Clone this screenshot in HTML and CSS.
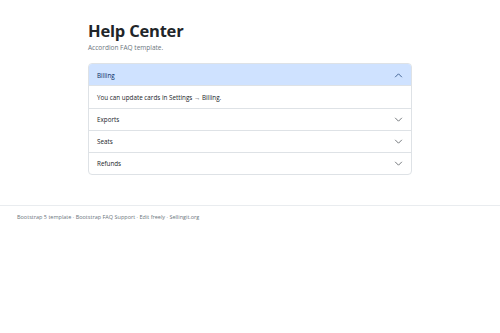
FILE: index.html
```html
<!DOCTYPE html>
<html lang="en">
<head>
<meta charset="utf-8">
<title>Help Center</title>
<link rel="stylesheet" href="styles.css">
</head>
<body>
<main class="container">
  <h1 class="title">Help Center</h1>
  <p class="lead">Accordion FAQ template.</p>
  <div class="accordion">
    <div class="item">
      <div class="header active">
        <span>Billing</span>
        <svg class="chev" viewBox="0 0 16 16" width="9" height="9"><path d="M2 11 L8 5 L14 11" fill="none" stroke="#052c65" stroke-width="1.2"/></svg>
      </div>
      <div class="body">You can update cards in Settings → Billing.</div>
    </div>
    <div class="item">
      <div class="header">
        <span>Exports</span>
        <svg class="chev" viewBox="0 0 16 16" width="9" height="9"><path d="M2 5 L8 11 L14 5" fill="none" stroke="#343a40" stroke-width="1.2"/></svg>
      </div>
    </div>
    <div class="item">
      <div class="header">
        <span>Seats</span>
        <svg class="chev" viewBox="0 0 16 16" width="9" height="9"><path d="M2 5 L8 11 L14 5" fill="none" stroke="#343a40" stroke-width="1.2"/></svg>
      </div>
    </div>
    <div class="item">
      <div class="header">
        <span>Refunds</span>
        <svg class="chev" viewBox="0 0 16 16" width="9" height="9"><path d="M2 5 L8 11 L14 5" fill="none" stroke="#343a40" stroke-width="1.2"/></svg>
      </div>
    </div>
  </div>
</main>
<footer class="footer">Bootstrap 5 template · Bootstrap FAQ Support · Edit freely · Sellingit.org</footer>
</body>
</html>
```
FILE: styles.css
```css
html, body {
  margin: 0;
  padding: 0;
  background: #fff;
}
body {
  font-family: "Open Sans", "Noto Sans", sans-serif;
  color: #212529;
}
.container {
  width: 324px;
  margin: 0 auto;
  padding-top: 20px;
  padding-bottom: 30px;
}
.title {
  margin: 0;
  font-size: 16.5px;
  font-weight: 700;
  line-height: 22px;
  letter-spacing: -0.2px;
}
.lead {
  margin: 1px 0 10px;
  font-size: 6.5px;
  line-height: 10px;
  color: #6c757d;
}
.accordion {
  border: 1px solid #dee2e6;
  border-radius: 4px;
  overflow: hidden;
}
.item + .item {
  border-top: 1px solid #dee2e6;
}
.header {
  height: 21px;
  display: flex;
  align-items: center;
  justify-content: space-between;
  padding: 0 8px;
  font-size: 6.3px;
  color: #212529;
}
.header.active {
  background: #cfe2ff;
  color: #052c65;
  box-shadow: inset 0 -1px 0 #dee2e6;
  height: 22px;
}
.chev {
  display: block;
}
.body {
  height: 22px;
  display: flex;
  align-items: center;
  padding: 0 8px;
  font-size: 6.3px;
  color: #212529;
}
.footer {
  border-top: 1px solid #e9ecef;
  padding: 7px 17px;
  font-size: 5.5px;
  line-height: 8px;
  color: #6c757d;
}
```
